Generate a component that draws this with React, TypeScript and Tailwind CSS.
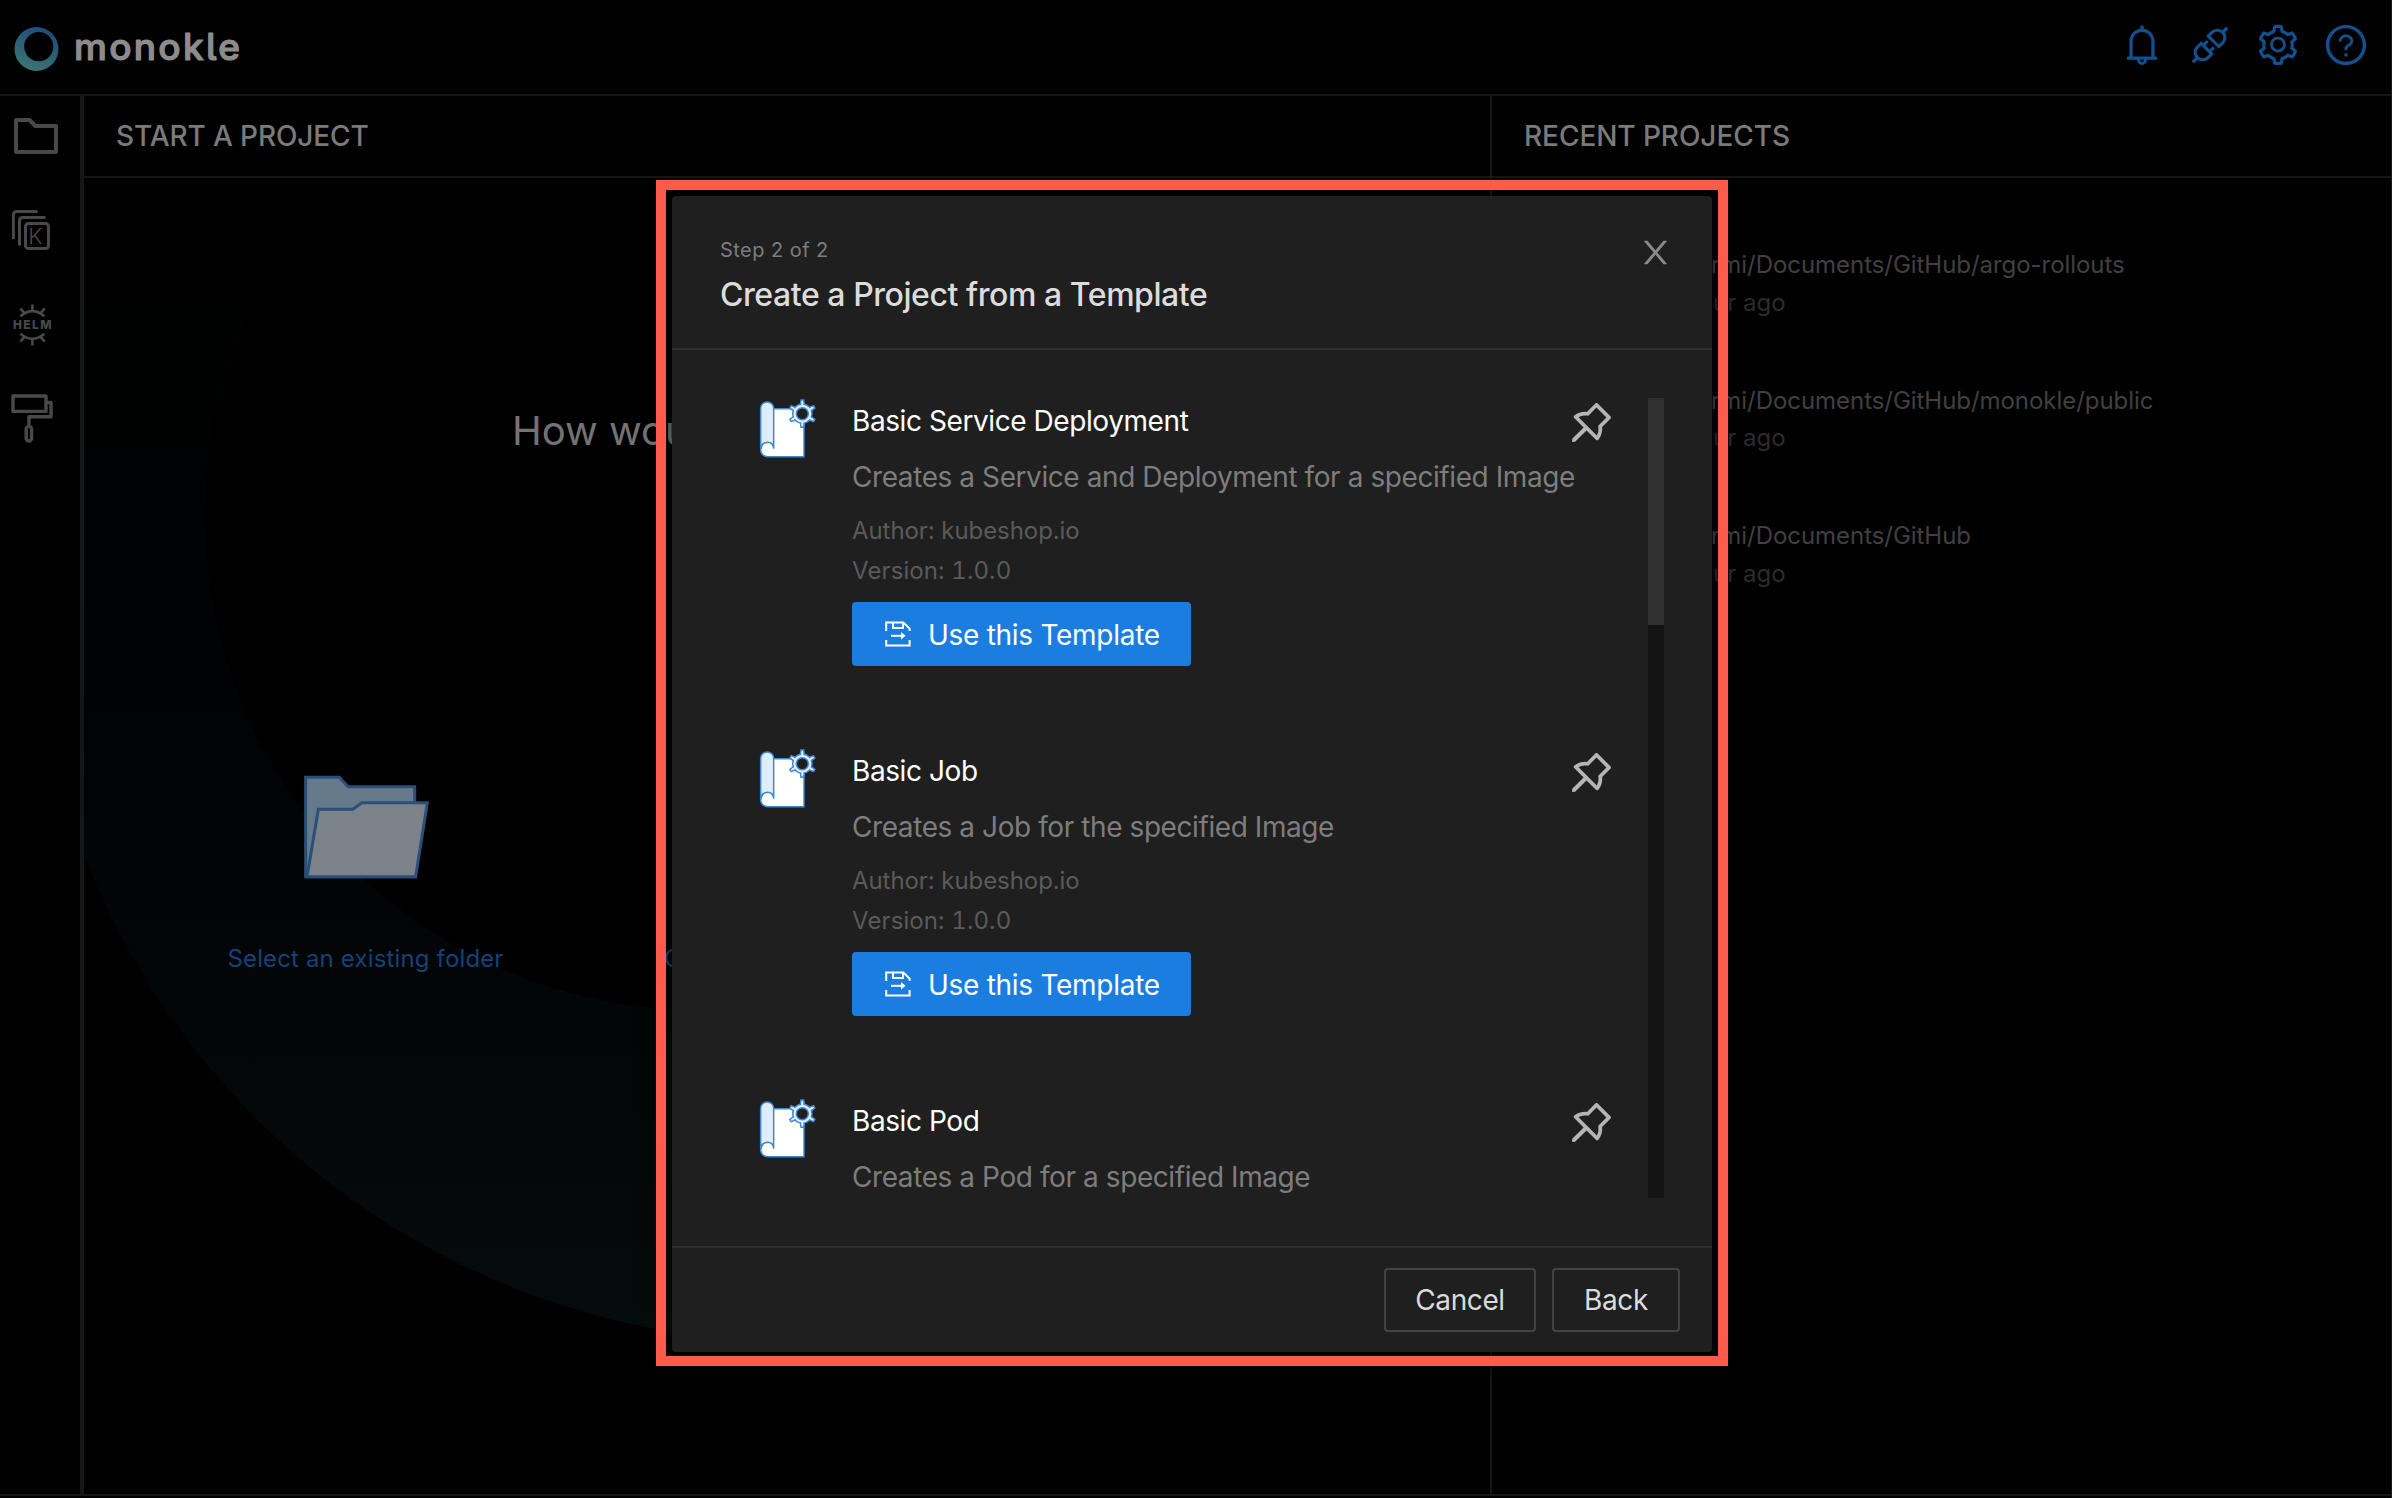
import {
  AiOutlineApi,
  AiOutlineBell,
  AiOutlinePushpin,
  AiOutlineQuestionCircle,
  AiOutlineSetting,
} from 'react-icons/ai'

interface Template {
  name: string
  description: string
  author?: string
  version?: string
}

const templates: Template[] = [
  {
    name: 'Basic Service Deployment',
    description: 'Creates a Service and Deployment for a specified Image',
    author: 'kubeshop.io',
    version: '1.0.0',
  },
  {
    name: 'Basic Job',
    description: 'Creates a Job for the specified Image',
    author: 'kubeshop.io',
    version: '1.0.0',
  },
  { name: 'Basic Pod', description: 'Creates a Pod for a specified Image' },
]

const recentProjects = [
  'rmi/Documents/GitHub/argo-rollouts',
  'rmi/Documents/GitHub/monokle/public',
  'rmi/Documents/GitHub',
]

function Logo() {
  return (
    <svg className="ml-[14px] h-[60px] w-[240px]" viewBox="14 17 240 60">
      <defs>
        <linearGradient id="ring" x1="0.7" y1="0" x2="0.3" y2="1">
          <stop offset="0" stopColor="#1d4a80" />
          <stop offset="0.5" stopColor="#2d6074" />
          <stop offset="1" stopColor="#3c7571" />
        </linearGradient>
      </defs>
      <path
        fill="url(#ring)"
        fillRule="evenodd"
        d="M36.5 27a22 22 0 1 0 0 44a22 22 0 1 0 0-44ZM38.8 32a14.6 14.6 0 1 1 0 29.2a14.6 14.6 0 1 1 0-29.2Z"
      />
      <text
        x="74"
        y="60"
        fill="#8c8c8c"
        stroke="#8c8c8c"
        strokeWidth="1.2"
        strokeLinejoin="round"
        textLength="166"
        className="font-['Inter'] text-[37px] font-medium [font-feature-settings:'cv05']"
      >
        monokle
      </text>
    </svg>
  )
}

function FolderIcon() {
  return (
    <svg className="h-[36px] w-[44px]" viewBox="0 0 44 36" fill="none" stroke="#494949" strokeWidth="4" strokeLinejoin="round">
      <path d="M2 2H15.6L21.4 8H42V34H2Z" />
    </svg>
  )
}

function KustomizeIcon() {
  return (
    <svg className="h-[40px] w-[38px]" viewBox="12 210 38 40" fill="none" stroke="#494949" strokeWidth="3" strokeLinecap="butt">
      <path d="M13.4 239V215Q13.4 211.5 17 211.5H37.6" />
      <path d="M19.5 245.6V221Q19.5 217.5 23 217.5H45.4" />
      <rect x="25.5" y="223.5" width="23" height="25" rx="3" />
      <text x="28.2" y="244" fill="#494949" stroke="none" className="font-['Inter'] text-[22px] font-light">
        K
      </text>
    </svg>
  )
}

function HelmIcon() {
  return (
    <svg className="h-[44px] w-[40px]" viewBox="12 303 40 44" fill="none" stroke="#494949" strokeWidth="2.6">
      <path d="M20.4 316.2Q32.4 306 44.4 316.2M32.4 304.5V311M20.5 308.4L24.4 313.2M44.6 308.4L40.6 313.2" />
      <path d="M20.4 333.8Q32.4 344 44.4 333.8M32.4 345.6V339M20.5 341.6L24.4 336.8M44.6 341.6L40.6 336.8" />
      <text
        x="13"
        y="329.4"
        fill="#494949"
        stroke="none"
        textLength="38.5"
        className="font-['Inter'] text-[12px] font-extrabold"
      >
        HELM
      </text>
    </svg>
  )
}

function RollerIcon() {
  return (
    <svg className="h-[50px] w-[42px]" viewBox="11 394 42 50" fill="none" stroke="#494949" strokeWidth="3.4" strokeLinejoin="round">
      <rect x="13" y="396" width="33" height="15.4" />
      <path d="M46 402.4H51V416.8H29V426" />
      <rect x="26.2" y="426.4" width="5.4" height="14.6" rx="2.7" />
    </svg>
  )
}

function OpenFolder() {
  return (
    <svg className="ml-0.5 h-[104px] w-[126px]" viewBox="312 105 378 312" stroke="#2a5078" strokeWidth="9">
      <path fill="#677a8b" d="M317 112H418L444 140H644V410H317Z" />
      <path fill="#7b828a" d="M355 208H458L486 188H682L647 410H321Z" />
    </svg>
  )
}

const gearTeeth = [0, 60, 120, 180, 240, 300]

function TemplateIcon() {
  return (
    <svg className="h-[64px] w-[60px] shrink-0" viewBox="48 54 180 192" stroke="#4189cf" strokeWidth="4.5">
      <path fill="#fff" d="M62 208Q64 188 82 187L100 86H192V230H82Q62 228 62 208Z" />
      <path fill="#dfedfc" d="M62 208V84a19.5 18 0 0 1 39 0V206Q100 187 82 187Q64 188 62 208Z" />
      <g fill="#dfedfc">
        {gearTeeth.map((angle) => (
          <path key={angle} d="M181 75L183 60H191L193 75" transform={`rotate(${angle} 187 101)`} />
        ))}
        <circle cx="187" cy="101" r="29" />
      </g>
      <g fill="#dfedfc" stroke="none">
        {gearTeeth.map((angle) => (
          <path key={angle} d="M183 80L185 66H189L191 80Z" transform={`rotate(${angle} 187 101)`} />
        ))}
      </g>
      <circle cx="187" cy="101" r="18" fill="#1f1f1f" />
    </svg>
  )
}

function SaveIcon() {
  return (
    <svg className="h-[26px] w-[26px]" viewBox="0 0 26 26" fill="none" stroke="#fff" strokeWidth="2">
      <path d="M1.2 10V1.6H18.4L24.6 7.6V10" />
      <path d="M8 1.6V7H18V1.6" />
      <path d="M1.2 19V24.6H24.6V19" />
      <path d="M6 14.8H17" />
      <path d="M16 11L20.6 14.8L16 18.6Z" fill="#fff" stroke="none" />
    </svg>
  )
}

function CloseIcon() {
  return (
    <svg className="h-[37px] w-[37px]" viewBox="0 0 1024 1024" fill="#8a8a8a">
      <path d="M563.8 512l262.5-312.9c4.4-5.2.7-13.1-6.1-13.1h-79.8c-4.7 0-9.2 2.1-12.3 5.7L511.6 449.8 295.1 191.7c-3-3.6-7.5-5.7-12.3-5.7H203c-6.8 0-10.5 7.9-6.1 13.1L459.4 512 196.9 824.9A7.95 7.95 0 0 0 203 838h79.8c4.7 0 9.2-2.1 12.3-5.7l216.5-258.1 216.5 258.1c3 3.6 7.5 5.7 12.3 5.7h79.8c6.8 0 10.5-7.9 6.1-13.1L563.8 512z" />
    </svg>
  )
}

function BackdropRing() {
  return (
    <svg className="absolute top-[197px] left-0 h-[1100px] w-[640px]" viewBox="84 293 640 1100">
      <defs>
        <linearGradient id="fade" x1="0" y1="293" x2="0" y2="1342" gradientUnits="userSpaceOnUse">
          <stop offset="0" stopColor="#000101" />
          <stop offset="0.3" stopColor="#010203" />
          <stop offset="0.5" stopColor="#020304" />
          <stop offset="0.7" stopColor="#030607" />
          <stop offset="1" stopColor="#060b0b" />
        </linearGradient>
      </defs>
      <path
        fill="url(#fade)"
        fillRule="evenodd"
        d="M796 -186a764 764 0 1 0 0 1528a764 764 0 1 0 0-1528ZM699 22a494 494 0 1 1 0 988a494 494 0 1 1 0-988Z"
      />
    </svg>
  )
}

function TemplateItem({ name, description, author, version }: Template) {
  return (
    <li className="flex h-[350px] pl-9">
      <TemplateIcon />
      <div className="ml-9 flex-1">
        <div className="flex h-11 items-center justify-between pr-[30px]">
          <h3 className="pt-px text-[28px] tracking-[-0.42px] text-white">{name}</h3>
          <AiOutlinePushpin className="mt-1 size-[53px] text-[#b5b5b5]" />
        </div>
        <p className="mt-[13px] text-[28px] leading-[44px] tracking-[-0.42px] whitespace-nowrap text-[#7d7d7d]">
          {description}
        </p>
        {author && (
          <>
            <p className="mt-3 text-[24px] leading-[40px] tracking-[-0.07px] text-[#5a5a5a]">Author: {author}</p>
            <p className="text-[24px] leading-[40px] tracking-[0.1px] text-[#5a5a5a] tabular-nums">Version: {version}</p>
            <button className="mt-[11px] flex h-16 w-[339px] items-center rounded-[4px] bg-[#1a7ddf] pl-[33px] text-[28px] tracking-[-0.28px] text-white">
              <SaveIcon />
              <span className="ml-[17px] pt-px">Use this Template</span>
            </button>
          </>
        )}
      </div>
    </li>
  )
}

function TemplateModal() {
  return (
    <div className="absolute top-[196px] left-[672px] flex h-[1156px] w-[1040px] flex-col rounded-[4px] bg-[#1f1f1f] shadow-[0_12px_32px_rgba(0,0,0,0.5)]">
      <header className="flex h-[154px] justify-between border-b-2 border-[#303030] pt-[38px] pr-[38px] pl-12">
        <div>
          <p className="text-[20px] leading-8 tracking-[0.45px] text-[#7a7d81]">Step 2 of 2</p>
          <h2 className="mt-[5px] text-[32px] leading-[48px] font-medium tracking-[-0.44px] text-[#dcdcdc]">
            Create a Project from a Template
          </h2>
        </div>
        <CloseIcon />
      </header>
      <div className="flex h-[896px] p-12">
        <ul className="h-[800px] flex-1 overflow-hidden">
          {templates.map((t) => (
            <TemplateItem key={t.name} {...t} />
          ))}
        </ul>
        <div className="w-4 bg-[#141414]">
          <div className="h-[227px] bg-[#303030]" />
        </div>
      </div>
      <footer className="flex h-[106px] justify-end gap-4 border-t-2 border-[#303030] pt-5 pr-8 text-[28px] tracking-[-0.4px] text-[#dbdbdb]">
        <button className="h-16 w-[152px] rounded-[4px] border-2 border-[#434343]">Cancel</button>
        <button className="h-16 w-32 rounded-[4px] border-2 border-[#434343]">Back</button>
      </footer>
    </div>
  )
}

export default function App() {
  return (
    <div className="relative flex h-[1498px] w-[2392px] flex-col overflow-hidden border-r border-[#1a1a1a] bg-black font-['Inter',sans-serif]">
      <header className="flex h-24 items-center justify-between border-b-2 border-[#161616] pr-[22px]">
        <Logo />
        <nav className="mb-1 flex gap-[22px] text-[46px] text-[#12508f]">
          <AiOutlineBell />
          <AiOutlineApi />
          <AiOutlineSetting />
          <AiOutlineQuestionCircle />
        </nav>
      </header>

      <div className="flex h-[1400px] border-b-2 border-[#161616]">
        <aside className="flex w-[84px] flex-col border-r-4 border-[#161616] pt-[22px] pl-[11px]">
          <div className="ml-[3px] h-[92px]">
            <FolderIcon />
          </div>
          <div className="ml-px h-[93px]">
            <KustomizeIcon />
          </div>
          <div className="ml-px h-[91px]">
            <HelmIcon />
          </div>
          <RollerIcon />
        </aside>

        <main className="relative w-[1408px] overflow-hidden border-r-2 border-[#161616]">
          <BackdropRing />
          <h1 className="h-[82px] border-b-2 border-[#161616] pl-8 text-[28px] leading-[81px] font-medium tracking-[-0.12px] text-[#7a7a7a]">
            START A PROJECT
          </h1>
          <div className="relative pt-[228px]">
            <p className="pl-[428px] text-[40px] leading-[49px] text-[#737373]">How wou</p>
            <div className="mt-[320px] flex items-end pl-[143px] text-[24px] leading-8 tracking-[0.15px] text-[#13427a]">
              <div className="flex w-[277px] flex-col items-center">
                <OpenFolder />
                <span className="mt-16 whitespace-nowrap">Select an existing folder</span>
              </div>
              <span className="ml-[160px]">C</span>
            </div>
          </div>
        </main>

        <section className="flex-1">
          <h1 className="h-[82px] border-b-2 border-[#161616] pl-8 text-[28px] leading-[81px] font-medium tracking-[-0.06px] text-[#7a7a7a]">
            RECENT PROJECTS
          </h1>
          <ul className="pt-[68px] text-[24px] leading-[37.5px]">
            {recentProjects.map((path) => (
              <li key={path} className="h-[135.5px] pl-[219px]">
                <p className="tracking-[-0.05px] text-[#404040]">{path}</p>
                <p className="pl-0.5 text-[#2c2c2c]">ur ago</p>
              </li>
            ))}
          </ul>
        </section>
      </div>

      <TemplateModal />
      <div className="pointer-events-none absolute top-[180px] left-[656px] h-[1186px] w-[1072px] border-[10px] border-[#ff5a4c]" />
    </div>
  )
}
